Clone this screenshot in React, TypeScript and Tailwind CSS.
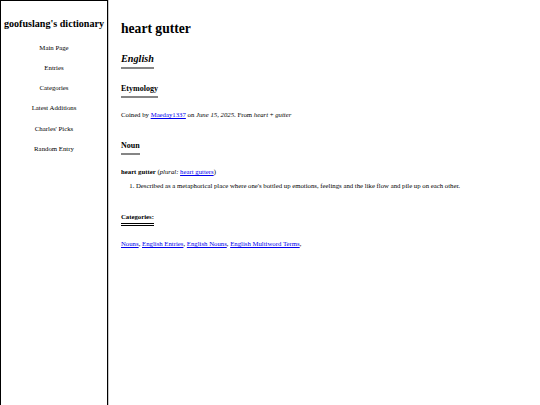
import React from "react";

const serif = { fontFamily: '"Liberation Serif", "Times New Roman", serif' };

function Link({ children }: { children: React.ReactNode }) {
  return <a href="#" className="text-[#0000ee] underline">{children}</a>;
}

export default function App() {
  const nav = ["Main Page", "Entries", "Categories", "Latest Additions", "Charles' Picks", "Random Entry"];
  return (
    <div style={serif} className="flex w-[540px] h-[405px] bg-white text-black overflow-hidden">
      <aside className="w-[108px] h-full shrink-0 border border-b-0 border-black shadow-[1px_0_0_#c8c8c8] flex flex-col items-center">
        <div className="mt-[17px] text-[10.1px] leading-[12px] font-bold whitespace-nowrap">goofuslang's dictionary</div>
        <nav className="mt-[13.5px] flex flex-col items-center gap-[12.3px] text-[6.8px] leading-[8px]">
          {nav.map((n) => (
            <div key={n}>{n}</div>
          ))}
        </nav>
      </aside>
      <main className="flex-1 pl-[13px] flex flex-col items-start text-[6.75px] leading-[8px]">
        <h1 className="mt-[20.5px] text-[13.6px] leading-[16px] font-bold">heart gutter</h1>
        <h2 className="mt-[16.5px] text-[10.2px] leading-[12px] font-bold italic pb-[2px] border-b-2 border-[#858585]">English</h2>
        <h3 className="mt-[15px] text-[8px] leading-[10px] font-bold pb-[1.5px] border-b-2 border-[#858585]">Etymology</h3>
        <p className="mt-[13.5px]">
          Coined by <Link>Maeday1337</Link> on <i>June 15, 2025</i>. From <i>heart</i> + <i>gutter</i>
        </p>
        <h3 className="mt-[22px] text-[8px] leading-[10px] font-bold pb-[1.5px] border-b-2 border-[#858585]">Noun</h3>
        <p className="mt-[13.5px]">
          <b>heart gutter</b> (<i>plural:</i> <Link>heart gutters</Link>)
        </p>
        <ol className="mt-[6px] list-decimal pl-[15px]">
          <li>Described as a metaphorical place where one's bottled up emotions, feelings and the like flow and pile up on each other.</li>
        </ol>
        <h4 className="mt-[23px] font-bold pb-[2px] border-b-[3px] border-double border-black">Categories:</h4>
        <p className="mt-[14px]">
          <Link>Nouns</Link>, <Link>English Entries</Link>, <Link>English Nouns</Link>, <Link>English Multiword Terms</Link>,
        </p>
      </main>
    </div>
  );
}
